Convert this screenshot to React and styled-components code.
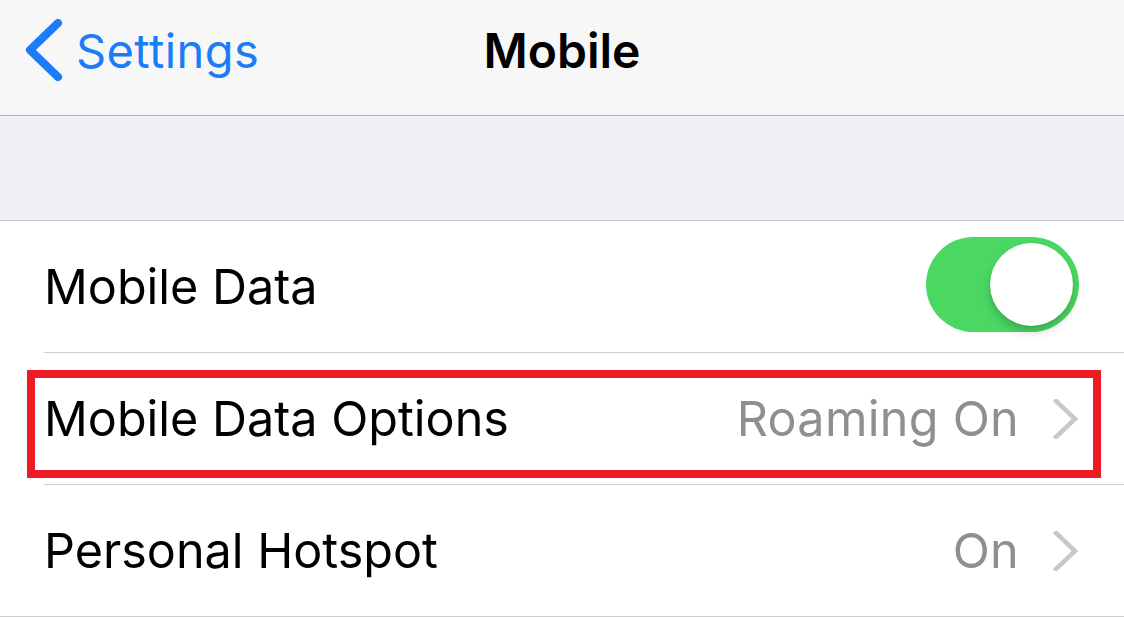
import React from "react";
import styled, { createGlobalStyle } from "styled-components";

const Global = createGlobalStyle`
  html, body {
    margin: 0;
    padding: 0;
    background: #ffffff;
    font-family: Inter, "Liberation Sans", sans-serif;
    -webkit-font-smoothing: antialiased;
  }
`;

const Screen = styled.div`
  width: 1124px;
  height: 617px;
  overflow: hidden;
  background: #ffffff;
`;

const NavBar = styled.div`
  height: 115px;
  display: grid;
  grid-template-columns: 1fr auto 1fr;
  align-items: center;
  background: #f7f7f8;
  border-bottom: 1px solid #b2b2b6;
`;

const Back = styled.div`
  display: flex;
  align-items: center;
  gap: 12px;
  padding-left: 24px;
  color: #1a7cf6;
  font-size: 47px;
  letter-spacing: 0.4px;
  margin-top: -14px;
`;

const Title = styled.div`
  font-size: 48px;
  font-weight: 600;
  color: #000;
  margin-top: -14px;
`;

const Band = styled.div`
  height: 104px;
  background: #efeff4;
  border-bottom: 1px solid #c8c7cc;
`;

const Row = styled.div`
  position: relative;
  height: 131px;
  display: flex;
  align-items: center;
  justify-content: space-between;
  padding: 0 45px 0 44px;
  box-sizing: border-box;
`;

const Separator = styled.div`
  height: 1px;
  background: #cfcfd2;
  margin-left: ${(p) => (p.$full ? "0" : "44px")};
`;

const Label = styled.div`
  font-size: 48.5px;
  color: #000;
`;

const Detail = styled.div`
  display: flex;
  align-items: center;
  gap: 34px;
  color: #8e8e93;
  font-size: 48.5px;
  letter-spacing: 0.3px;
`;

const Switch = styled.div`
  position: relative;
  width: 153px;
  height: 95px;
  border-radius: 48px;
  background: #4ad862;
  margin-top: -4px;
`;

const Knob = styled.div`
  position: absolute;
  top: 6px;
  right: 6px;
  width: 83px;
  height: 83px;
  border-radius: 50%;
  background: #ffffff;
  box-shadow: 0 6px 10px rgba(0, 0, 0, 0.18), 0 1px 2px rgba(0, 0, 0, 0.12);
`;

const Highlight = styled.div`
  position: absolute;
  left: 27px;
  top: 17px;
  width: 1074px;
  height: 108px;
  box-sizing: border-box;
  border: 8px solid #ed1c24;
  pointer-events: none;
`;

const BackChevron = () => (
  <svg width="40" height="64" viewBox="0 0 40 64">
    <polyline
      points="34,4 6,31 34,58"
      fill="none"
      stroke="#1a7cf6"
      strokeWidth="8"
      strokeLinecap="round"
      strokeLinejoin="round"
    />
  </svg>
);

const Disclosure = () => (
  <svg width="26" height="40" viewBox="0 0 26 40">
    <polyline
      points="3,2 22,20 3,38"
      fill="none"
      stroke="#c7c7cc"
      strokeWidth="4.5"
      strokeLinecap="square"
    />
  </svg>
);

export default function App() {
  return (
    <Screen>
      <Global />
      <NavBar>
        <Back>
          <BackChevron />
          Settings
        </Back>
        <Title>Mobile</Title>
        <div />
      </NavBar>
      <Band />
      <Row>
        <Label>Mobile Data</Label>
        <Switch>
          <Knob />
        </Switch>
      </Row>
      <Separator />
      <Row>
        <Label>Mobile Data Options</Label>
        <Detail>
          Roaming On
          <Disclosure />
        </Detail>
        <Highlight />
      </Row>
      <Separator />
      <Row>
        <Label>Personal Hotspot</Label>
        <Detail>
          On
          <Disclosure />
        </Detail>
      </Row>
      <Separator $full />
    </Screen>
  );
}
